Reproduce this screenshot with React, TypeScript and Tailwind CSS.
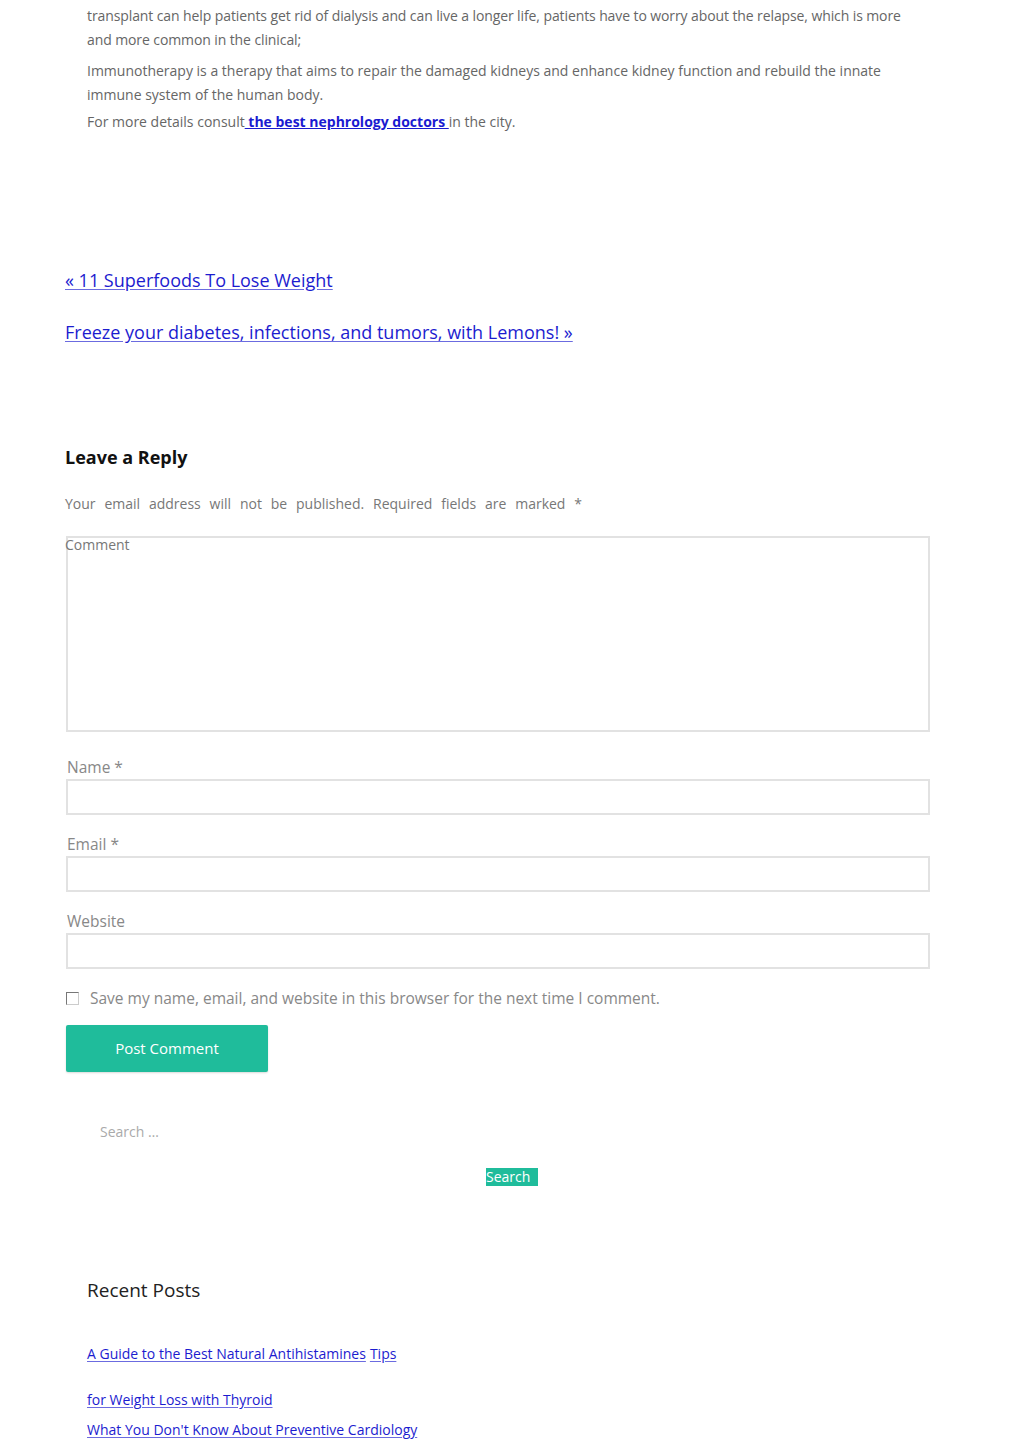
import React from 'react';

const linkCls = 'text-[#1c1ccf] underline underline-offset-2 decoration-[#6b6be0]';

const Field: React.FC<{ label: string }> = ({ label }) => (
  <div className="flex flex-col">
    <label className="text-[15.5px] leading-[20px] text-[#888] pl-px">{label}</label>
    <input className="h-[36px] border-2 border-[#e2e2e2] bg-white mt-[2px] outline-none" />
  </div>
);

const recentPosts = [
  'A Guide to the Best Natural Antihistamines',
  'Tips',
];

export default function App() {
  return (
    <div className="w-[1024px] min-h-[1449px] bg-white font-['Open_Sans',sans-serif] text-[#666]">
      <div className="pt-[4px] pl-[87px] pr-[105px] text-[14px] leading-[24px]">
        <p className="tracking-[-0.1px]">
          transplant can help patients get rid of dialysis and can live a longer life, patients have to worry about the relapse, which is more and more common in the clinical;
        </p>
        <p className="mt-[7px]">
          Immunotherapy is a therapy that aims to repair the damaged kidneys and enhance kidney function and rebuild the innate immune system of the human body.
        </p>
        <p className="mt-[3px]">
          For more details consult
          <a href="#" className="font-bold text-[#1a1ad0] underline"> the best nephrology doctors </a>
          in the city.
        </p>
      </div>

      <nav className="pl-[65px] mt-[132px] flex flex-col gap-[24px] text-[18px] leading-[28px]">
        <a href="#" className={linkCls}>« 11 Superfoods To Lose Weight</a>
        <a href="#" className={linkCls}>Freeze your diabetes, infections, and tumors, with Lemons! »</a>
      </nav>

      <section className="pl-[65px] pr-[94px] mt-[99px]">
        <h3 className="text-[18px] leading-[24px] font-bold text-[#111]">Leave a Reply</h3>
        <p className="mt-[25px] text-[14px] leading-[20px] text-[#777] w-[517px] text-justify [text-align-last:justify]">
          Your email address will not be published. Required fields are marked *
        </p>

        <div className="relative mt-[22px] ml-px h-[196px] border-2 border-[#e2e2e2]">
          <span className="absolute -left-[3px] -top-[3px] text-[14px] leading-[20px] text-[#777]">Comment</span>
        </div>

        <div className="mt-[25px] ml-px flex flex-col gap-[19px]">
          <Field label="Name *" />
          <Field label="Email *" />
          <Field label="Website" />
        </div>

        <label className="mt-[19px] ml-px flex items-center gap-[11px] text-[15.5px] leading-[20px] text-[#888]">
          <span className="w-[13px] h-[13px] border border-[#777] border-r-[#ccc] border-b-[#ccc] bg-white" />
          Save my name, email, and website in this browser for the next time I comment.
        </label>

        <button className="mt-[17px] ml-px w-[202px] h-[47px] bg-[#1fbc9b] text-white text-[15px] rounded-[2px] shadow-[0_1px_2px_rgba(0,0,0,0.15)]">
          Post Comment
        </button>
      </section>

      <div className="pl-[100px] mt-[50px] text-[14px] leading-[20px] text-[#aaa]">Search …</div>
      <div className="flex justify-center mt-[26px]">
        <button className="h-[18px] w-[52px] bg-[#1fbc9b] text-white text-[14px] leading-[18px] text-left">Search</button>
      </div>

      <section className="pl-[87px] mt-[91px]">
        <h2 className="text-[19px] leading-[26px] text-[#222]">Recent Posts</h2>
        <ul className="mt-[41px] text-[14px] leading-[20px]">
          <li className="flex gap-[4px]">
            {recentPosts.map((p) => (
              <a key={p} href="#" className={linkCls}>{p}</a>
            ))}
          </li>
          <li className="mt-[26px]">
            <a href="#" className={linkCls}>for Weight Loss with Thyroid</a>
          </li>
          <li className="mt-[10px]">
            <a href="#" className={linkCls}>What You Don't Know About Preventive Cardiology</a>
          </li>
        </ul>
      </section>
    </div>
  );
}
